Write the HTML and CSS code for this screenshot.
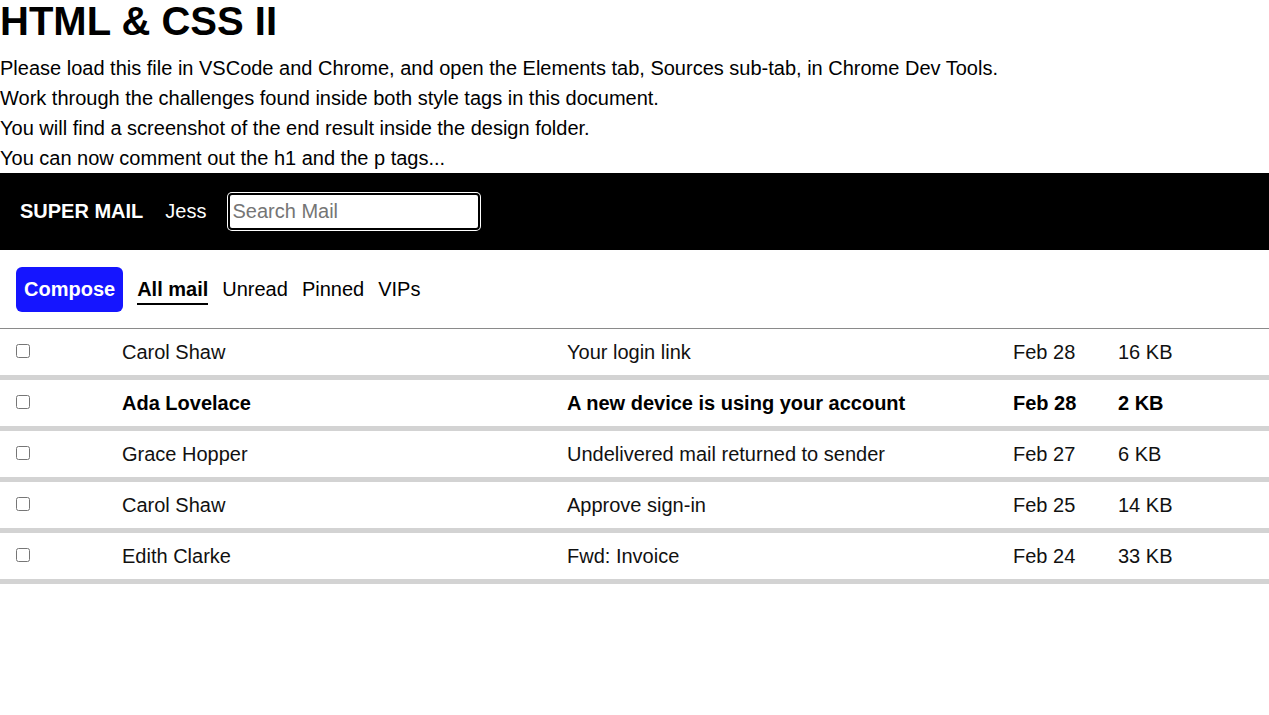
FILE: index.html
```html
<!DOCTYPE html>
<html lang="en">
<head>
<meta charset="utf-8">
<title>HTML &amp; CSS II</title>
<link rel="stylesheet" href="styles.css">
</head>
<body>
<h1 class="title">HTML &amp; CSS II</h1>
<p class="intro">Please load this file in VSCode and Chrome, and open the Elements tab, Sources sub-tab, in Chrome Dev Tools.</p>
<p class="intro">Work through the challenges found inside both style tags in this document.</p>
<p class="intro">You will find a screenshot of the end result inside the design folder.</p>
<p class="intro">You can now comment out the h1 and the p tags...</p>

<header class="topbar">
  <span class="brand">SUPER MAIL</span>
  <span class="user">Jess</span>
  <input class="search" type="text" placeholder="Search Mail">
</header>

<nav class="toolbar">
  <button class="compose">Compose</button>
  <ul class="tabs">
    <li class="tab tab-active">All mail</li>
    <li class="tab">Unread</li>
    <li class="tab">Pinned</li>
    <li class="tab">VIPs</li>
  </ul>
</nav>

<main class="list">
  <div class="row">
    <span class="cell"><input class="check" type="checkbox"></span>
    <span class="cell">Carol Shaw</span>
    <span class="cell">Your login link</span>
    <span class="cell">Feb 28</span>
    <span class="cell">16 KB</span>
  </div>
  <div class="row row-unread">
    <span class="cell"><input class="check" type="checkbox"></span>
    <span class="cell">Ada Lovelace</span>
    <span class="cell">A new device is using your account</span>
    <span class="cell">Feb 28</span>
    <span class="cell">2 KB</span>
  </div>
  <div class="row">
    <span class="cell"><input class="check" type="checkbox"></span>
    <span class="cell">Grace Hopper</span>
    <span class="cell">Undelivered mail returned to sender</span>
    <span class="cell">Feb 27</span>
    <span class="cell">6 KB</span>
  </div>
  <div class="row">
    <span class="cell"><input class="check" type="checkbox"></span>
    <span class="cell">Carol Shaw</span>
    <span class="cell">Approve sign-in</span>
    <span class="cell">Feb 25</span>
    <span class="cell">14 KB</span>
  </div>
  <div class="row">
    <span class="cell"><input class="check" type="checkbox"></span>
    <span class="cell">Edith Clarke</span>
    <span class="cell">Fwd: Invoice</span>
    <span class="cell">Feb 24</span>
    <span class="cell">33 KB</span>
  </div>
</main>
</body>
</html>
```

FILE: styles.css
```css
* {
  box-sizing: border-box;
}

body {
  margin: 0;
  font-family: "Liberation Sans", Arial, sans-serif;
  font-size: 20px;
  color: #000;
  background: #fff;
}

.title {
  margin: 0 0 11px;
  font-size: 40px;
  line-height: 42px;
  font-weight: bold;
}

.intro {
  margin: 0;
  line-height: 30px;
}

.topbar {
  display: flex;
  align-items: center;
  gap: 22px;
  height: 77px;
  padding: 0 20px;
  background: #000;
  color: #fff;
}

.brand {
  font-weight: bold;
}

.search {
  width: 252px;
  height: 37px;
  padding: 0 2px;
  font-family: "Liberation Sans", Arial, sans-serif;
  font-size: 20px;
  color: #000;
  background: #fff;
  border: 2px solid #000;
  border-radius: 4px;
  box-shadow: 0 0 0 1px #fff;
  outline: none;
}

.search::placeholder {
  color: #757575;
}

.toolbar {
  display: flex;
  align-items: center;
  gap: 14px;
  height: 79px;
  padding: 0 16px;
  border-bottom: 1px solid #8a8a8a;
}

.compose {
  height: 45px;
  padding: 0 8px;
  font-family: "Liberation Sans", Arial, sans-serif;
  font-size: 20px;
  font-weight: bold;
  color: #fff;
  background: #1515ff;
  border: none;
  border-radius: 6px;
}

.tabs {
  display: flex;
  gap: 14px;
  margin: 4px 0 0;
  padding: 0;
  list-style: none;
}

.tab {
  line-height: 23px;
  padding-bottom: 2px;
  border-bottom: 2px solid transparent;
}

.tab-active {
  font-weight: bold;
  border-bottom-color: #000;
}

.row {
  display: grid;
  grid-template-columns: 106px 445px 446px 105px 1fr;
  align-items: center;
  height: 51px;
  padding: 0 0 0 16px;
  border-bottom: 5px solid #d3d3d3;
  color: #111;
}

.row-unread {
  font-weight: bold;
  color: #000;
}

.cell {
  white-space: nowrap;
  line-height: 23px;
}

.check {
  display: block;
  width: 14px;
  height: 14px;
  margin: 0;
  position: relative;
  top: -1px;
}
```
